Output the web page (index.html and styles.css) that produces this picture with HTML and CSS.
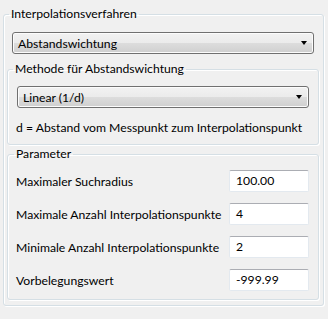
FILE: index.html
```html
<!DOCTYPE html>
<html>
<head>
<meta charset="utf-8">
<link rel="stylesheet" href="styles.css">
</head>
<body>
<fieldset class="group outer">
  <legend class="legend">Interpolationsverfahren</legend>
  <div class="combo combo-main"><span>Abstandswichtung</span><span class="arrow"></span></div>
  <fieldset class="group inner method">
    <legend class="legend">Methode für Abstandswichtung</legend>
    <div class="combo combo-method"><span>Linear (1/d)</span><span class="arrow"></span></div>
    <div class="note">d = Abstand vom Messpunkt zum Interpolationspunkt</div>
  </fieldset>
  <fieldset class="group inner params">
    <legend class="legend">Parameter</legend>
    <div class="row"><span class="label">Maximaler Suchradius</span><span class="input">100.00</span></div>
    <div class="row"><span class="label">Maximale Anzahl Interpolationspunkte</span><span class="input">4</span></div>
    <div class="row"><span class="label">Minimale Anzahl Interpolationspunkte</span><span class="input">2</span></div>
    <div class="row"><span class="label">Vorbelegungswert</span><span class="input">-999.99</span></div>
  </fieldset>
</fieldset>
</body>
</html>
```
FILE: styles.css
```css
html, body {
  margin: 0;
  padding: 0;
  background: #f0f0f0;
  width: 328px;
  height: 319px;
  overflow: hidden;
}
body {
  font-family: "Lato", "Noto Sans", sans-serif;
  font-size: 12.2px;
  color: #000;
  white-space: nowrap;
}
.group {
  border: 1px solid #d5dfe5;
  border-radius: 3px;
  box-shadow: inset 1px 1px 0 #fff, 1px 1px 0 #fff;
  min-width: 0;
}
.legend {
  padding: 0 2px;
  line-height: 16px;
  height: 16px;
}
.outer {
  margin: 6px 4px 0 3px;
  padding: 10px 4px 6px 3px;
  height: 300px;
  box-sizing: border-box;
}
.outer > .legend {
  margin-left: 2px;
}
.combo {
  height: 22px;
  box-sizing: border-box;
  border: 1px solid #707070;
  border-radius: 3px;
  background: linear-gradient(#f2f2f2 0%, #ebebeb 50%, #dddddd 50%, #cfcfcf 100%);
  box-shadow: inset 0 0 0 1px #fcfcfc;
  display: flex;
  align-items: center;
  justify-content: space-between;
  padding: 0 6px 0 5px;
}
.arrow {
  width: 0;
  height: 0;
  border-left: 3.5px solid transparent;
  border-right: 3.5px solid transparent;
  border-top: 4px solid #000;
}
.combo-main {
  margin: 0 5px;
}
.inner {
  margin: 0;
  padding: 0;
}
.method > .legend {
  margin-left: 5px;
}
.method {
  margin-top: 7px;
  padding: 9px 0 0 0;
  height: 84px;
  box-sizing: border-box;
}
.combo-method {
  margin: 0 9px;
}
.note {
  margin: 12px 0 0 8px;
  line-height: 16px;
}
.params {
  margin-top: 1px;
  padding: 8px 9px 0 8px;
  height: 154px;
  box-sizing: border-box;
}
.params > .legend {
  margin-left: -2px;
}
.row {
  display: flex;
  align-items: center;
  justify-content: space-between;
  height: 22px;
  margin-bottom: 11px;
}
.input {
  width: 80px;
  height: 22px;
  box-sizing: border-box;
  background: #fff;
  border: 1px solid #e3e9ef;
  border-top-color: #abadb3;
  border-radius: 2px;
  padding: 0 6px;
  line-height: 20px;
}
```
